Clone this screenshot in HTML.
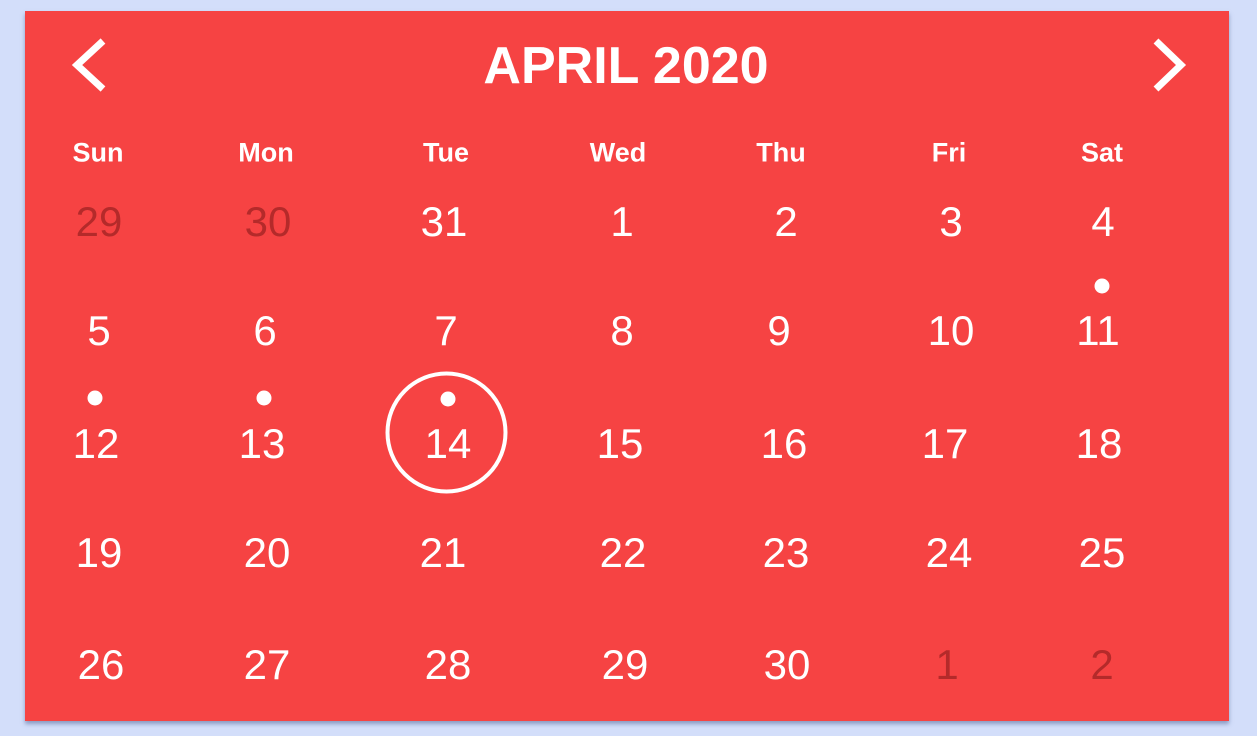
<!DOCTYPE html>
<html><head><meta charset="utf-8"><style>
html,body{margin:0;padding:0;}
body{width:1257px;height:736px;background:#d3defa;position:relative;overflow:hidden;font-family:"Liberation Sans",sans-serif;}
.card{position:absolute;left:25px;top:11px;width:1204px;height:710px;background:#f64343;box-shadow:0 3px 4px rgba(80,100,150,.55);}
.t{position:absolute;color:#fff;transform:translate(-50%,-50%);white-space:nowrap;line-height:1;}
.n{font-size:42px;}
.d{color:#b42a2a;}
.h{font-size:27px;font-weight:bold;}
.dot{position:absolute;width:15px;height:15px;border-radius:50%;background:#fff;transform:translate(-50%,-50%);}
</style></head><body>
<div class="card"></div>
<svg style="position:absolute;left:0;top:0" width="1257" height="736">
<polyline points="103,41 77,65 103,89" fill="none" stroke="#fff" stroke-width="7"/>
<polyline points="1156,41 1181,65 1156,89" fill="none" stroke="#fff" stroke-width="7"/>
<circle cx="446.5" cy="432.5" r="59" fill="none" stroke="#fff" stroke-width="4"/>
</svg>
<div class="t" style="left:626px;top:66px;font-size:52px;font-weight:bold;">APRIL 2020</div>
<div class="t h" style="left:98px;top:153px">Sun</div>
<div class="t h" style="left:266px;top:153px">Mon</div>
<div class="t h" style="left:446px;top:153px">Tue</div>
<div class="t h" style="left:618px;top:153px">Wed</div>
<div class="t h" style="left:781px;top:153px">Thu</div>
<div class="t h" style="left:949px;top:153px">Fri</div>
<div class="t h" style="left:1102px;top:153px">Sat</div>

<div class="t n d" style="left:99px;top:222px">29</div>
<div class="t n d" style="left:268px;top:222px">30</div>
<div class="t n" style="left:444px;top:222px">31</div>
<div class="t n" style="left:622px;top:222px">1</div>
<div class="t n" style="left:786px;top:222px">2</div>
<div class="t n" style="left:951px;top:222px">3</div>
<div class="t n" style="left:1103px;top:222px">4</div>

<div class="t n" style="left:99px;top:331px">5</div>
<div class="t n" style="left:265px;top:331px">6</div>
<div class="t n" style="left:446px;top:331px">7</div>
<div class="t n" style="left:622px;top:331px">8</div>
<div class="t n" style="left:779px;top:331px">9</div>
<div class="t n" style="left:951px;top:331px">10</div>
<div class="t n" style="left:1098px;top:331px">11</div>

<div class="t n" style="left:96px;top:444px">12</div>
<div class="t n" style="left:262px;top:444px">13</div>
<div class="t n" style="left:448px;top:444px">14</div>
<div class="t n" style="left:620px;top:444px">15</div>
<div class="t n" style="left:784px;top:444px">16</div>
<div class="t n" style="left:945px;top:444px">17</div>
<div class="t n" style="left:1099px;top:444px">18</div>

<div class="t n" style="left:99px;top:553px">19</div>
<div class="t n" style="left:267px;top:553px">20</div>
<div class="t n" style="left:443px;top:553px">21</div>
<div class="t n" style="left:623px;top:553px">22</div>
<div class="t n" style="left:786px;top:553px">23</div>
<div class="t n" style="left:949px;top:553px">24</div>
<div class="t n" style="left:1102px;top:553px">25</div>

<div class="t n" style="left:101px;top:665px">26</div>
<div class="t n" style="left:267px;top:665px">27</div>
<div class="t n" style="left:448px;top:665px">28</div>
<div class="t n" style="left:625px;top:665px">29</div>
<div class="t n" style="left:787px;top:665px">30</div>
<div class="t n d" style="left:947px;top:665px">1</div>
<div class="t n d" style="left:1102px;top:665px">2</div>

<div class="dot" style="left:1102px;top:286px"></div>
<div class="dot" style="left:95px;top:398px"></div>
<div class="dot" style="left:264px;top:398px"></div>
<div class="dot" style="left:448px;top:399px"></div>
</body></html>
